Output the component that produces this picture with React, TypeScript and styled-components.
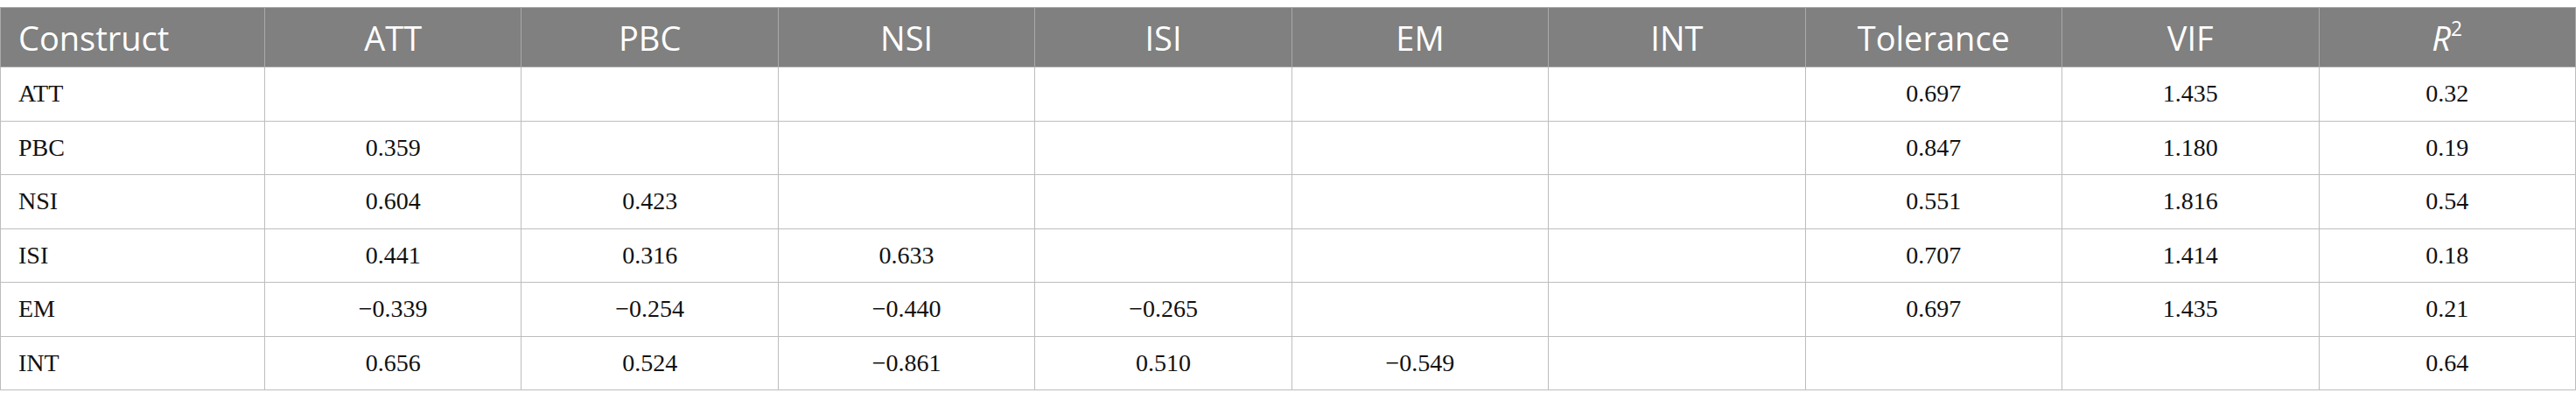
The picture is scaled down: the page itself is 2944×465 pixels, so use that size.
import React from "react";
import styled, { createGlobalStyle } from "styled-components";

const Global = createGlobalStyle`
  html, body { margin: 0; padding: 0; background: #ffffff; }
  body { padding-top: 8px; }
`;

const Table = styled.table`
  width: 2944px;
  border-collapse: collapse;
  table-layout: fixed;
  border: 1px solid #bdbdbd;
`;

const HeadCell = styled.th<{ $left?: boolean }>`
  background: #7f807f;
  color: #ffffff;
  font-family: "Open Sans", "Noto Sans", sans-serif;
  font-weight: 400;
  font-size: 38px;
  height: 67px;
  padding: 0 20px;
  text-align: ${(p) => (p.$left ? "left" : "center")};
  vertical-align: middle;
  border: 1px solid #a9a9a9;
  line-height: 1;
`;

const Cell = styled.td<{ $left?: boolean }>`
  font-family: "Liberation Serif", "Times New Roman", serif;
  font-size: 28px;
  color: #111111;
  height: 60.5px;
  padding: 0 20px;
  text-align: ${(p) => (p.$left ? "left" : "center")};
  vertical-align: middle;
  border: 1px solid #bdbdbd;
  line-height: 1;
`;

const FirstCol = styled.col`
  width: 302px;
`;

const Sup = styled.sup`
  font-size: 0.6em;
  font-style: normal;
  vertical-align: 0.75em;
  line-height: 0;
`;

const headers = ["ATT", "PBC", "NSI", "ISI", "EM", "INT", "Tolerance", "VIF"];

const rows: [string, string[]][] = [
  ["ATT", ["", "", "", "", "", "", "0.697", "1.435", "0.32"]],
  ["PBC", ["0.359", "", "", "", "", "", "0.847", "1.180", "0.19"]],
  ["NSI", ["0.604", "0.423", "", "", "", "", "0.551", "1.816", "0.54"]],
  ["ISI", ["0.441", "0.316", "0.633", "", "", "", "0.707", "1.414", "0.18"]],
  ["EM", ["\u22120.339", "\u22120.254", "\u22120.440", "\u22120.265", "", "", "0.697", "1.435", "0.21"]],
  ["INT", ["0.656", "0.524", "\u22120.861", "0.510", "\u22120.549", "", "", "", "0.64"]],
];

export default function App() {
  return (
    <>
      <Global />
      <Table>
        <colgroup>
          <FirstCol />
          {Array.from({ length: 9 }).map((_, i) => (
            <col key={i} />
          ))}
        </colgroup>
        <thead>
          <tr>
            <HeadCell $left>Construct</HeadCell>
            {headers.map((h) => (
              <HeadCell key={h}>{h}</HeadCell>
            ))}
            <HeadCell>
              <i>R</i>
              <Sup>2</Sup>
            </HeadCell>
          </tr>
        </thead>
        <tbody>
          {rows.map(([name, vals]) => (
            <tr key={name}>
              <Cell $left>{name}</Cell>
              {vals.map((v, i) => (
                <Cell key={i}>{v}</Cell>
              ))}
            </tr>
          ))}
        </tbody>
      </Table>
    </>
  );
}
